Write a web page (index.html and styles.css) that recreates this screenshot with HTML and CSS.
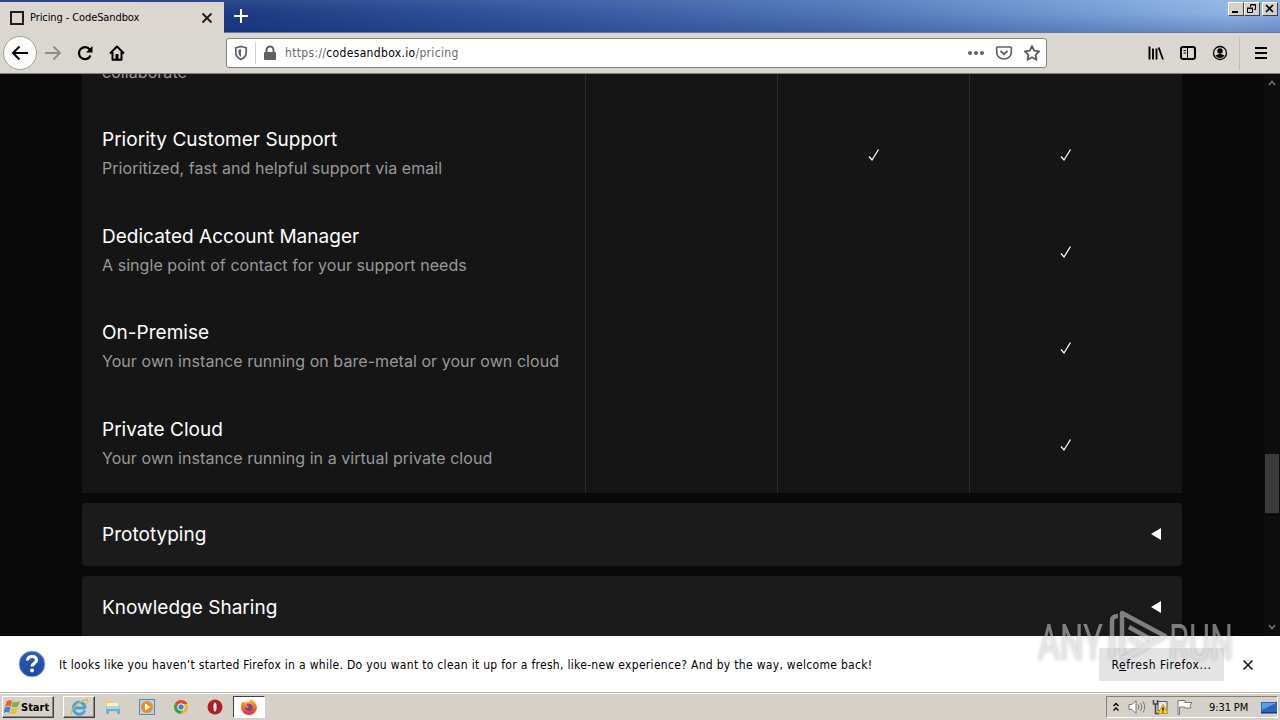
FILE: index.html
```html
<!DOCTYPE html>
<html lang="en">
<head>
<meta charset="utf-8">
<title>Pricing - CodeSandbox</title>
<link rel="stylesheet" href="styles.css">
</head>
<body>
<div class="screen">
  <header class="titlebar">
    <div class="tab">
      <span class="favicon"></span>
      <span class="tab-title">Pricing - CodeSandbox</span>
      <svg class="tab-close" width="12" height="12" viewBox="0 0 12 12"><path d="M1.500 1.500l9 9M10.500 1.500l-9 9" stroke="#1a1a1a" stroke-width="1.800"/></svg>
    </div>
    <svg class="new-tab" width="14" height="14" viewBox="0 0 14 14"><path d="M7 0v14M0 7h14" stroke="#fff" stroke-width="2"/></svg>
    <div class="window-buttons">
      <span class="wbtn"><svg width="14" height="12"><path d="M3 9h6" stroke="#000" stroke-width="2"/></svg></span>
      <span class="wbtn"><svg width="14" height="12"><path d="M5.500 4V1.500h5v5H9M5 2h6M2.500 5.500h5v4h-5zM2 5h6" fill="none" stroke="#000"/></svg></span>
      <span class="wbtn last"><svg width="14" height="12"><path d="M3 2l7 7M10 2l-7 7" stroke="#000" stroke-width="1.600"/></svg></span>
    </div>
  </header>

  <nav class="toolbar">
    <span class="back"><svg width="18" height="16" viewBox="0 0 18 16"><path d="M17 8H2M8.500 1.500L2 8l6.500 6.500" fill="none" stroke="#000" stroke-width="2"/></svg></span>
    <svg class="forward" width="18" height="16" viewBox="0 0 18 16"><path d="M1 8h15M9.500 1.500L16 8l-6.500 6.500" fill="none" stroke="#8f8d8a" stroke-width="1.800"/></svg>
    <svg class="reload" width="16" height="16" viewBox="0 0 16 16"><path d="M12.800 4.500A6 6 0 1 0 13.500 10.500" fill="none" stroke="#000" stroke-width="2.200"/><path d="M15.500 1v6.500H9z"/></svg>
    <svg class="home" width="16" height="16" viewBox="0 0 16 16"><path d="M1 8.500L8 1.500l7 7M3.500 7v7.800h9V7" fill="none" stroke="#000" stroke-width="2" stroke-linejoin="round"/><path d="M6.500 9h3v6h-3z"/></svg>
    <div class="urlbar">
      <svg class="shield" width="14" height="16" viewBox="0 0 14 16"><path d="M7 1.500l5.200 1.300v4.700c0 3.500-2.400 5.700-5.200 7-2.800-1.300-5.200-3.500-5.200-7V2.800z" fill="none" stroke="#5c5c5c" stroke-width="1.700"/><path d="M7 4.200v7.800C5.300 10.800 4.500 9.500 4.500 7.500V4.800z" fill="#5c5c5c"/></svg>
      <span class="divider"></span>
      <svg class="lock" width="14" height="16" viewBox="0 0 14 16"><path d="M3.500 8V5a3.500 3.500 0 0 1 7 0v3" fill="none" stroke="#606060" stroke-width="2"/><rect x="1" y="7" width="12" height="8" rx="1" fill="#606060"/></svg>
      <span class="url">https://<b>codesandbox.io</b>/pricing</span>
      <svg class="dots" width="18" height="6"><circle cx="3" cy="3" r="2"/><circle cx="9" cy="3" r="2"/><circle cx="15" cy="3" r="2"/></svg>
      <svg class="pocket" width="18" height="16" viewBox="0 0 18 16"><path d="M2.500 2h13a.8.8 0 0 1 .8.800V7.500a7.300 6.500 0 0 1-14.600 0V2.800a.8.8 0 0 1 .8-.8z" fill="none" stroke="#606060" stroke-width="1.700"/><path d="M5.500 6L9 9.200 12.500 6" fill="none" stroke="#606060" stroke-width="1.800"/></svg>
      <svg class="star" width="18" height="18" viewBox="0 0 18 18"><path d="M9 2l2.200 4.700 5 .6-3.700 3.500 1 5L9 13.300l-4.500 2.500 1-5L1.800 7.300l5-.6z" fill="none" stroke="#5c5c5c" stroke-width="1.800" stroke-linejoin="round"/></svg>
    </div>
    <svg class="library" width="16" height="16" viewBox="0 0 16 16"><path d="M1.500 1.500v13M5 3.500v11M8.500 3.500v11" stroke="#000" stroke-width="1.900"/><path d="M10.700 2.500l4.300 12" stroke="#000" stroke-width="1.800"/></svg>
    <svg class="sidebar" width="16" height="16" viewBox="0 0 16 16"><rect x="1" y="2" width="14" height="12" rx="2" fill="none" stroke="#000" stroke-width="2"/><path d="M7.500 2v12M3.500 5.500h2.500M3.500 8h2.500" stroke="#000"/></svg>
    <svg class="account" width="16" height="16" viewBox="0 0 16 16"><circle cx="8" cy="8" r="6.500" fill="none" stroke="#000" stroke-width="1.300"/><circle cx="8" cy="6" r="2.700"/><path d="M3.500 10.500q4.500-3 9 0Q11 13 8 13t-4.500-2.500z"/></svg>
    <span class="tool-divider"></span>
    <svg class="menu" width="13" height="12"><path d="M0 1h12M0 6h12M0 11h12" stroke="#000" stroke-width="2"/></svg>
  </nav>

  <main class="viewport">
    <div class="content">
      <section class="plans">
        <div class="row partial"><div class="feature"><p>collaborate</p></div><i></i><i></i><i></i></div>
        <div class="row"><div class="feature"><h3>Priority Customer Support</h3><p>Prioritized, fast and helpful support via email</p></div><i></i><i><svg class="check" width="12" height="14"><path d="M1 8.500l3 3.500L10.500 1.500" /></svg></i><i><svg class="check" width="12" height="14"><path d="M1 8.500l3 3.500L10.500 1.500" /></svg></i></div>
        <div class="row"><div class="feature"><h3>Dedicated Account Manager</h3><p>A single point of contact for your support needs</p></div><i></i><i></i><i><svg class="check" width="12" height="14"><path d="M1 8.500l3 3.500L10.500 1.500" /></svg></i></div>
        <div class="row"><div class="feature"><h3>On-Premise</h3><p>Your own instance running on bare-metal or your own cloud</p></div><i></i><i></i><i><svg class="check" width="12" height="14"><path d="M1 8.500l3 3.500L10.500 1.500" /></svg></i></div>
        <div class="row"><div class="feature"><h3>Private Cloud</h3><p>Your own instance running in a virtual private cloud</p></div><i></i><i></i><i><svg class="check" width="12" height="14"><path d="M1 8.500l3 3.500L10.500 1.500" /></svg></i></div>
      </section>
      <section class="group"><h3>Prototyping</h3><span class="triangle"></span></section>
      <section class="group"><h3>Knowledge Sharing</h3><span class="triangle"></span></section>
    </div>
    <aside class="scrollbar">
      <svg width="8" height="6"><path d="M1 5l3-3.500L7 5" fill="none" stroke="#777" stroke-width="1.500"/></svg>
      <span class="thumb"></span>
      <svg width="8" height="6"><path d="M1 1l3 3.500L7 1" fill="none" stroke="#777" stroke-width="1.500"/></svg>
    </aside>
  </main>

  <section class="notice">
    <svg class="help" width="28" height="28" viewBox="0 0 28 28"><defs><linearGradient id="hb" x2="0" y2="1"><stop stop-color="#2c5cb8"/><stop offset="1" stop-color="#1d489c"/></linearGradient></defs><circle cx="14" cy="14" r="13" fill="url(#hb)" stroke="#a9b9dc"/><path d="M9.500 10.500c0-5.500 9-5.500 9-.5 0 3.500-4.500 3.200-4.500 6.500" fill="none" stroke="#fff" stroke-width="3.200"/><circle cx="14" cy="20.500" r="2" fill="#fff"/></svg>
    <span class="message">It looks like you haven’t started Firefox in a while. Do you want to clean it up for a fresh, like-new experience? And by the way, welcome back!</span>
    <button class="refresh">R<u>e</u>fresh Firefox...</button>
    <svg class="notice-close" width="12" height="12" viewBox="0 0 12 12"><path d="M1.500 1.500l9 9M10.500 1.500l-9 9" stroke="#1a1a1a" stroke-width="1.700"/></svg>
  </section>

  <footer class="taskbar">
    <div class="start"><svg width="16" height="16" viewBox="0 0 16 16"><path d="M2.500 2.500q3-2 5.500-.5L6.800 7.500Q4 6 1 8z" fill="#e8632c"/><path d="M8.800 2.500q3 1.500 7-.5l-1.800 5.500q-3 1.500-6.500.300z" fill="#7db53c"/><path d="M.8 8.800Q4 7 6.500 8.500L5 14Q3 12-.2 14z" fill="#3d83d1"/><path d="M7.500 8.800q3 1.500 6.200-.3l-1.500 5.700q-3 1.500-6.200.3z" fill="#f0bd2f"/></svg><b>Start</b></div>
    <div class="task ie"><svg width="20" height="20" viewBox="0 0 20 20"><path d="M16.500 11H5.500M15.800 13.500A6 6 0 1 1 16 9.500V11" fill="none" stroke="#3ea6dc" stroke-width="2.800"/><path d="M3 17C-1 15 10 3.500 18 2.500q2 .5-.5 4" fill="none" stroke="#e2b44b" stroke-width="1.300"/></svg></div>
    <svg class="quick" width="18" height="18" viewBox="0 0 18 18"><path d="M2 3h5l1 2h7v9H2z" fill="#eacb68"/><path d="M3 5h11v3H3z" fill="#fff2b5"/><path d="M2 9h14v7h-3v-3H5v3H2z" fill="#6ab2da"/><path d="M3 8h12l1 3H2z" fill="#a9d6ec"/></svg>
    <svg class="quick" width="18" height="18" viewBox="0 0 18 18"><rect x="1.500" y="1.500" width="15" height="15" fill="#b4d3ed" stroke="#4f8ebf"/><circle cx="9" cy="9" r="6" fill="#f28a1d"/><path d="M7 5.500l5.500 3.500L7 12.500z" fill="#fff"/></svg>
    <svg class="quick" width="18" height="18" viewBox="0 0 18 18"><circle cx="9" cy="9" r="7" fill="#eab92c"/><path d="M3 5.500a7 7 0 0 1 12.500.5H9L5.500 10z" fill="#dc4a38"/><path d="M3 5.500a7 7 0 0 0 5.500 10.500l3-5H7z" fill="#31a253"/><circle cx="9" cy="9" r="3.300" fill="#4c80d4" stroke="#fff"/></svg>
    <svg class="quick" width="18" height="18" viewBox="0 0 18 18"><ellipse cx="9" cy="9" rx="7.500" ry="7.500" fill="#b81b22"/><ellipse cx="9" cy="9" rx="2.200" ry="5.200" fill="#efe6e3" stroke="#7b1014"/></svg>
    <div class="task active"><svg width="18" height="18" viewBox="0 0 18 18"><defs><linearGradient id="ff" x2="0" y2="1"><stop stop-color="#ffbd2b"/><stop offset=".6" stop-color="#f4621d"/><stop offset="1" stop-color="#e32950"/></linearGradient></defs><path d="M1 9q0-4 2-6l2 2q2-2 4-1l2-3q5 3 6 8a8 8 0 0 1-16 0z" fill="url(#ff)"/><circle cx="9" cy="9.500" r="3.500" fill="#7144a2"/><path d="M4 7q3 0 5 2l-2 1z" fill="#ff9a21"/></svg></div>
    <div class="tray">
      <svg width="8" height="12"><path d="M1.500 5L4 2.500 6.500 5M1.500 9.500L4 7l2.500 2.500" fill="none" stroke="#000" stroke-width="1.400"/></svg>
      <svg class="sound" width="18" height="16" viewBox="0 0 18 16"><path d="M1 5.500h3l4-4v13l-4-4H1z" fill="#fff" stroke="#777"/><path d="M10 5.500q2 2.500 0 5M12.500 4q3 4 0 8M15 2.500q3.500 5.500 0 11" fill="none" stroke="#777"/></svg>
      <svg class="net" width="18" height="16" viewBox="0 0 18 16"><path d="M6 2.500h9v9H6z" fill="#e8e8e8" stroke="#555"/><path d="M1.500 1v4h4V1M3.500 5v9.500h4" fill="none" stroke="#444" stroke-width="1.500"/><path d="M11 5.500l5 9H6z" fill="#ffd11b" stroke="#c89908"/><path d="M11 8.500v3M11 12.500v1" stroke="#000" stroke-width="1.400"/></svg>
      <svg class="flag" width="18" height="16" viewBox="0 0 18 16"><path d="M2 15.500V1.500h7v2h7l-2 3 1 2.500H8.500V8H3.500v7.500z" fill="#fff" stroke="#777"/></svg>
      <span class="clock">9:31 PM</span>
      <svg class="desktop" width="16" height="13" viewBox="0 0 16 13"><path d="M0 1h16v10H0z" fill="#2865bb"/><path d="M1 2h14l-14 7z" fill="#5f9be2"/><path d="M0 11h16v1.500H0z" fill="#173a72"/></svg>
    </div>
  </footer>

  <svg class="watermark" width="204" height="64" viewBox="0 0 204 64">
    <g class="wm-text"><text x="4" y="53.500" textLength="65" lengthAdjust="spacingAndGlyphs">ANY</text><text x="135" y="53.500" textLength="64" lengthAdjust="spacingAndGlyphs">RUN</text></g>
    <path d="M78 52V15q0-5 6-5M88 48V7l43 23-43 23M95 21l23 13M95 32l13 7M88 53l24-12" fill="none" stroke="#d2d2d2" stroke-width="4.500" stroke-linejoin="round"/>
  </svg>
</div>
</body>
</html>
```
FILE: styles.css
```css
* { box-sizing: border-box; }
body { margin: 0; font-family: "DejaVu Sans Condensed", "DejaVu Sans", sans-serif; font-stretch: condensed; font-size: 11px; color: #000; }
svg { display: block; flex: none; }
.screen { position: relative; width: 1280px; height: 720px; overflow: hidden; display: flex; flex-direction: column; }

.titlebar { height: 33px; flex: none; display: flex; background: linear-gradient(#ffffff12, transparent 40%, #0a246a40), linear-gradient(97deg, #1c3a80, #1e3c84 20%, #33569f 42%, #5076b8 66%, #739bd3 84%, #8db5e4 96%, #85ace0); border-bottom: 1px solid #6a7a94; }
.tab { width: 224px; height: 33px; margin-top: 2px; padding: 0 11px 2px 10px; display: flex; align-items: center; background: #dad7d1; }
.favicon { width: 14px; height: 14px; border: 2px solid #1d1d1d; }
.tab-title { margin-left: 6px; flex: 1; letter-spacing: -.1px; white-space: nowrap; }
.new-tab { margin: 9px 0 0 10px; }
.window-buttons { margin-left: auto; padding: 2px 2px 0 0; display: flex; }
.wbtn { width: 16px; height: 14px; background: #d5d1c9; border: 1px solid; border-color: #fff #404040 #404040 #fff; }
.wbtn.last { margin-left: 2px; }

.toolbar { height: 41px; flex: none; display: flex; align-items: center; background: #dad7d1; border-bottom: 1px solid #85827c; }
.back { width: 34px; height: 34px; margin-left: 3px; border-radius: 50%; background: #fbfbfa; border: 1px solid #a09e99; display: flex; align-items: center; justify-content: center; }
.forward { margin-left: 7px; }
.reload { margin-left: 15px; }
.home { margin-left: 16px; }
.urlbar { width: 821px; height: 30px; margin-left: 101px; background: #fff; border: 1px solid #858379; border-radius: 3px; display: flex; align-items: center; }
.shield { margin-left: 7px; }
.divider { width: 1px; height: 22px; margin: 0 7px; background: #cfcfcf; }
.url { margin-left: 8px; font-size: 12px; letter-spacing: .33px; color: #686868; white-space: nowrap; flex: 1; }
.url b { font-weight: 400; color: #000; }
.dots { fill: #606060; }
.pocket { margin-left: 10px; }
.star { margin: 0 5px 0 10px; }
.library { margin-left: 101px; }
.sidebar, .account { margin-left: 16px; }
.tool-divider { width: 1px; height: 33px; margin-left: 11px; background: #c1beb8; }
.menu { margin-left: 15px; }

.viewport { height: 562px; flex: none; overflow: hidden; display: flex; background: #090909; color: #fff; font-family: Inter, sans-serif; font-stretch: normal; }
.content { width: 1100px; margin-left: 82px; flex: none; }
.plans { height: 419px; background: #151515; overflow: hidden; }
.row { display: grid; grid-template-columns: 503px 192px 192px 213px; height: 96.67px; }
.row.partial { height: 32.3px; }
.partial .feature { justify-content: flex-start; padding-top: 0; }
.partial p { margin-top: -14px; }
.feature { padding: 0 0 3px 20px; display: flex; flex-direction: column; justify-content: center; white-space: nowrap; }
.row i { border-left: 1px solid #2b2b2b; display: flex; align-items: center; justify-content: center; padding-top: 1px; }
.row i:last-child { padding-right: 20px; }
h3 { margin: 0; font-size: 19px; line-height: 28px; font-weight: 400; letter-spacing: .02px; }
p { margin: 2px 0 0; font-size: 16px; line-height: 24px; color: #999; letter-spacing: .06px; }
.check path { fill: none; stroke: #fff; stroke-width: 1.3; }
.group { height: 63px; margin-top: 10px; padding: 0 21px 0 20px; border-radius: 4px; background: #1b1b1b; display: flex; align-items: center; justify-content: space-between; }
.triangle { margin-bottom: 2px; border: 6px solid transparent; border-right: 10px solid #fff; border-left: 0; }
.scrollbar { width: 16px; margin-left: auto; padding: 6px 0; background: #0d0d0d; display: flex; flex-direction: column; align-items: center; justify-content: space-between; }
.thumb { width: 14px; height: 59px; background: #3a3a3a; margin-top: 256px; }

.notice { height: 57px; flex: none; background: #fff; display: flex; align-items: center; border-bottom: 1px solid #bbb8b1; }
.help { margin-left: 18px; }
.message { width: 815px; margin-left: 13px; padding-top: 2px; font-size: 12px; letter-spacing: .305px; white-space: nowrap; }
.refresh { width: 125px; height: 33px; margin: 1px 0 0 225px; padding: 0; border: 0; background: #e4e4e4; color: #000; font: inherit; font-size: 12px; letter-spacing: .55px; }
.notice-close { margin: 1px 0 0 18px; }

.taskbar { height: 27px; flex: none; background: #d5d1c9; border-top: 1px solid #fff; display: flex; align-items: center; }
.start { width: 52px; height: 22px; margin-left: 2px; display: flex; align-items: center; gap: 1px; padding-left: 1px; font-size: 11px; border: 1px solid; border-color: #fff #404040 #404040 #fff; box-shadow: inset -1px -1px #888; }
.task { width: 32px; height: 22px; display: flex; align-items: center; justify-content: center; border: 1px solid; border-color: #fff #404040 #404040 #fff; box-shadow: inset -1px -1px #888; }
.ie { margin-left: 9px; }
.quick { margin-left: 16px; }
.ie + .quick { margin-left: 9px; }
.task.active { margin-left: 9px; background: #fff; border-color: #404040 #fff #fff #404040; box-shadow: none; }
.tray { width: 172px; height: 22px; margin: 0 2px 0 auto; padding: 0 0 0 5px; display: flex; align-items: center; border: 1px solid; border-color: #858179 #fff #fff #858179; }
.sound { margin-left: 8px; }
.net, .flag { margin-left: 6px; }
.clock { margin-left: 15px; white-space: nowrap; letter-spacing: -.1px; }
.desktop { margin-left: auto; }

.watermark { position: absolute; left: 1034px; top: 606px; opacity: .55; filter: drop-shadow(0 0 2px #0006); }
.wm-text { font: 400 50px Roboto, sans-serif; fill: #d2d2d2; }
```
